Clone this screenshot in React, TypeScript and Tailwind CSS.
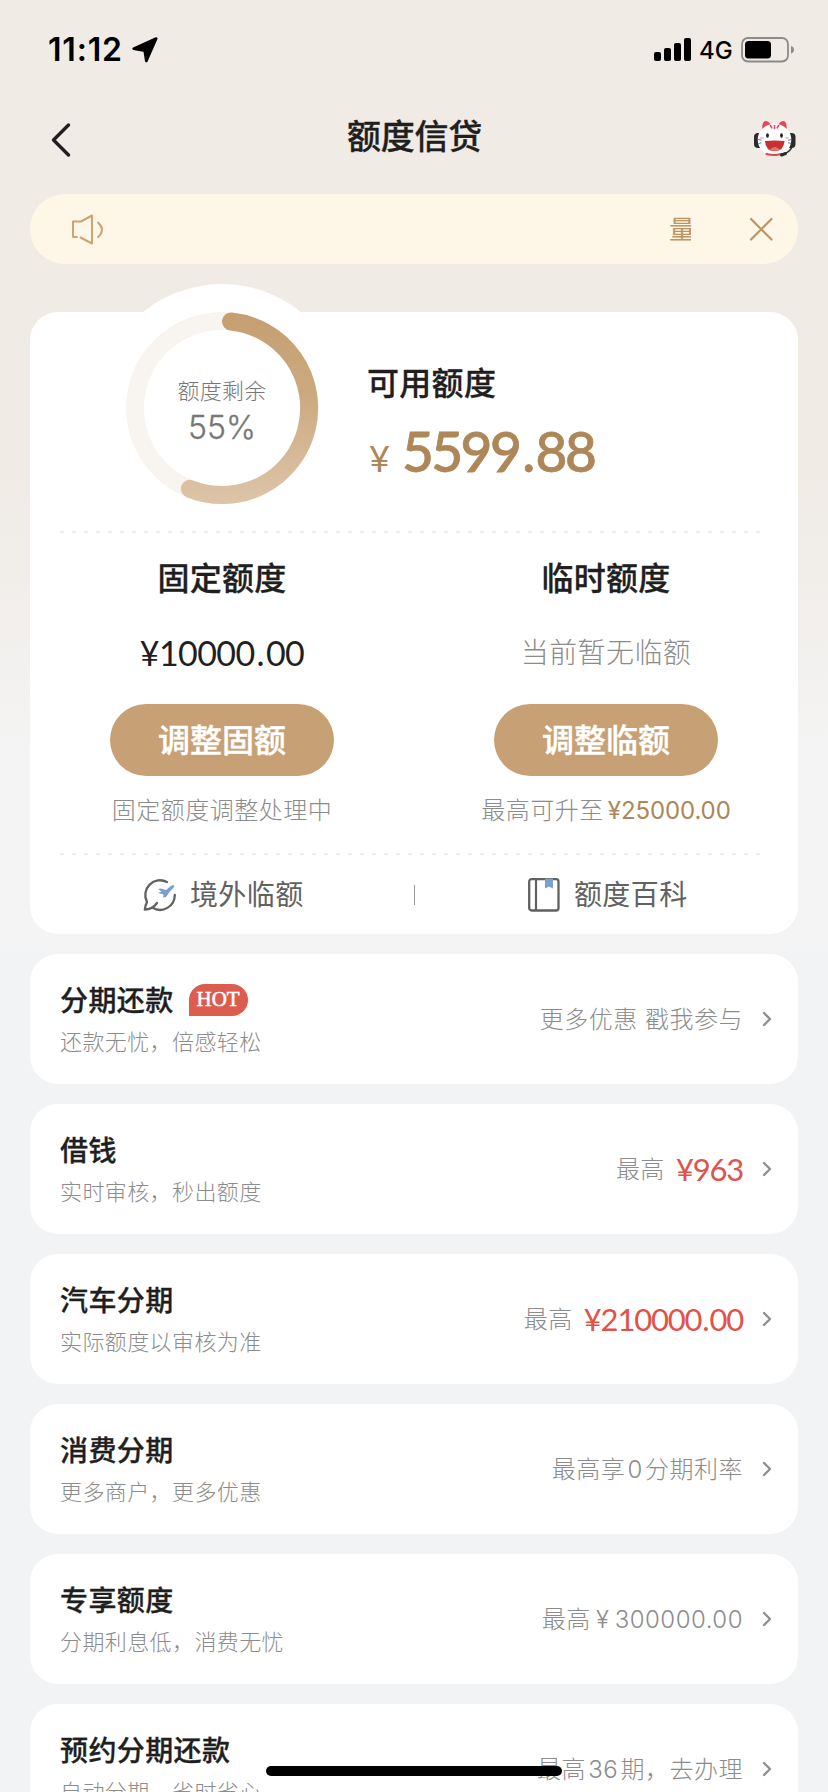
import React from "react";

type Row = {
    title: string;
    subtitle: string;
    note: string;
    noteClass?: string;
    amount?: string;
    hot?: boolean;
};

const rows: Row[] = [
    { title: "分期还款", subtitle: "还款无忧，倍感轻松", note: "更多优惠 戳我参与", hot: true },
    { title: "借钱", subtitle: "实时审核，秒出额度", note: "最高", amount: "¥963" },
    { title: "汽车分期", subtitle: "实际额度以审核为准", note: "最高", amount: "¥210000.00" },
    { title: "消费分期", subtitle: "更多商户，更多优惠", note: "最高享 0 分期利率", noteClass: "[word-spacing:-5px]" },
    { title: "专享额度", subtitle: "分期利息低，消费无忧", note: "最高 ¥ 300000.00", noteClass: "[word-spacing:-2px]" },
    { title: "预约分期还款", subtitle: "自动分期，省时省心", note: "最高 36 期，去办理", noteClass: "[word-spacing:-5px]" },
];

const StatusBar = () => (
    <div className="flex h-[99px] items-center justify-between pl-[48px] pr-[33px]">
        <div className="flex items-center gap-[9px]">
            <span className="text-[32px] font-semibold leading-none tracking-[0.8px] text-black">11:12</span>
            <svg width="26" height="26" viewBox="0 0 25 25">
                <path d="M23.3 1.5 L13.8 23 L12.2 13.2 L1.6 11.2 Z" fill="#000" stroke="#000" strokeWidth="2.6" strokeLinejoin="round" />
            </svg>
        </div>
        <div className="flex items-center">
            <svg width="38" height="24" viewBox="0 0 38 24">
                <rect x="0" y="14" width="7" height="9" rx="2" />
                <rect x="10" y="10" width="7" height="13" rx="2" />
                <rect x="20" y="5" width="7" height="18" rx="2" />
                <rect x="30" y="0" width="7" height="23" rx="2" />
            </svg>
            <span className="ml-[7px] mt-[3px] w-[42px] text-[24px] font-medium leading-none text-black">4G</span>
            <svg width="54" height="26" viewBox="0 0 54 26">
                <rect x="1" y="1" width="46" height="23.5" rx="6" fill="none" stroke="#8d8a87" strokeWidth="1.8" />
                <rect x="4" y="4" width="26" height="17.5" rx="3.5" />
                <path d="M50 9 Q53 10 53 12.7 Q53 15.5 50 16.5 Z" fill="#8d8a87" />
            </svg>
        </div>
    </div>
);

const CatIcon = () => (
    <svg className="mt-[3px]" width="44" height="38" viewBox="0 0 44 38">
        <rect x="1" y="13" width="9" height="15" rx="4" fill="#2b2b2d" />
        <rect x="33.5" y="13" width="9" height="15" rx="4" fill="#2b2b2d" />
        <path d="M9.5 11 Q8.5 1.5 12.5 1 Q16 1 18.5 6 Z" fill="#e5485a" />
        <path d="M33.5 11 Q34.5 1.5 30.5 1 Q27 1 24.5 6 Z" fill="#e5485a" />
        <ellipse cx="21.5" cy="19.8" rx="16.8" ry="16" fill="#fff" />
        <path d="M17.5 5.5 L18.8 7.8 M21.5 5.5 L21.5 8.5 M25.5 5.5 L24.2 7.8" stroke="#e5485a" strokeWidth="1.6" strokeLinecap="round" />
        <ellipse cx="14.5" cy="15.5" rx="1.4" ry="2.3" fill="#222" />
        <ellipse cx="28.5" cy="15.5" rx="1.4" ry="2.3" fill="#222" />
        <ellipse cx="9" cy="18" rx="2" ry="1" fill="#f7b9bd" />
        <ellipse cx="34" cy="18" rx="2" ry="1" fill="#f7b9bd" />
        <path d="M12 21 Q21.5 20 31.5 21 Q31 31 21.5 31 Q12.5 31 12 21 Z" fill="#c9302f" />
        <path d="M17 29.5 Q21.5 24.5 27 29.5 Q21.5 32 17 29.5 Z" fill="#e8716c" />
        <path d="M13.5 34 Q21.5 36 28 34" fill="none" stroke="#e0424f" strokeWidth="2.2" strokeLinecap="round" />
        <path d="M5 19.5 L8.5 20.2 M5.5 23.5 L8.5 22.7 M35 20.2 L38.5 19.5 M35 22.7 L38.5 23.5" stroke="#555" strokeWidth="0.8" />
        <path d="M39.5 26 Q36.5 33 29 34.5" fill="none" stroke="#2b2b2d" strokeWidth="1.5" />
        <path d="M28.5 35 L32.5 33.5" stroke="#2b2b2d" strokeWidth="3" strokeLinecap="round" />
    </svg>
);

// the decimal point sits wider apart than the digits
const Amount = ({ value, className, dotClass }: { value: string; className: string; dotClass: string }) => {
    const [whole, cents] = value.split(".");
    return (
        <span className={className}>
            {whole}
            {cents && <span className={dotClass}>.</span>}
            {cents}
        </span>
    );
};

const QuotaRing = () => (
    <div className="relative ml-[67px] mt-[-28px] h-[250px] w-[250px] shrink-0 rounded-full bg-white">
        <svg width="250" height="250" viewBox="0 0 250 250">
            <defs>
                <linearGradient id="ring" x1="0" y1="0" x2="0" y2="1">
                    <stop offset="0" stopColor="#c6a073" />
                    <stop offset="0.4" stopColor="#cba97f" />
                    <stop offset="1" stopColor="#dcc3a6" />
                </linearGradient>
            </defs>
            <circle cx="125" cy="124" r="87" fill="none" stroke="#f8f5f1" strokeWidth="18" />
            <path d="M134 37.5 A87 87 0 1 1 92.8 204.8" fill="none" stroke="url(#ring)" strokeWidth="18" strokeLinecap="round" />
        </svg>
        <div className="absolute inset-0 flex flex-col items-center pt-[91px] text-[#777]">
            <span className="text-[22px] font-light leading-[32px] tracking-[0.2px]">额度剩余</span>
            <span className="mt-[2px] text-[32px] font-light leading-[38px] [-webkit-text-stroke:0.3px]">55%</span>
        </div>
    </div>
);

const DashedLine = () => (
    <svg className="relative mx-[30px] block" width="708" height="2" viewBox="0 0 708 2">
        <line x1="0" y1="1" x2="702" y2="1" stroke="#e9e9e9" strokeWidth="1.5" strokeDasharray="4 8" />
    </svg>
);

const PlaneIcon = () => (
    <svg width="34" height="34" viewBox="0 0 34 34" fill="none">
        <path d="M24 4 A14.8 14.8 0 0 0 4 24 C2.5 27 2 29 1.8 31.5 Q9.500 31.500 14 25" stroke="#616161" strokeWidth="2.3" strokeLinecap="round" strokeLinejoin="round" />
        <path d="M9.500 29.800 A14.8 14.8 0 0 0 31.8 17" stroke="#616161" strokeWidth="2.3" strokeLinecap="round" />
        <path d="M15 11 L18 10.5 L23 12 L28.5 7.5 Q31.5 6.5 31.5 8.500 L26.5 14 L23 19 L20 19.5 L20.5 16.5 L15 15 L18.5 13.5 Z" fill="#7a9fd0" />
    </svg>
);

const BookIcon = () => (
    <svg width="32" height="34" viewBox="0 0 32 34" fill="none">
        <rect x="1.2" y="1.2" width="29.3" height="31.3" rx="2.5" stroke="#616161" strokeWidth="2.3" />
        <path d="M8 1 V33" stroke="#616161" strokeWidth="2.2" />
        <path d="M17 0.5 H25 V10.5 L21 8.5 L17 10.5 Z" fill="#7a9fd0" />
    </svg>
);

const QuotaCard = () => (
    <section className="mx-[30px] mt-12 h-[622px] rounded-[28px] bg-white">
        <div className="flex h-[219px]">
            <QuotaRing />
            <div className="ml-[20px] pt-[48px]">
                <h2 className="text-[32px] font-medium leading-[48px] tracking-[0.3px] text-[#1f1f1f] [-webkit-text-stroke:0.3px]">可用额度</h2>
                <div className="mt-[7px] flex items-baseline font-['Lato','Noto_Sans_CJK_SC',sans-serif] leading-[72px] text-[#ad8757]">
                    <span className="ml-[2px] w-[33px] text-[36px]">¥</span>
                    <Amount value="5599.88" className="text-[55px] font-medium tracking-[-2.6px] [-webkit-text-stroke:0.8px]" dotClass="mx-[3px]" />
                </div>
            </div>
        </div>
        <DashedLine />
        <div className="grid h-[320px] grid-cols-2">
            <div className="flex flex-col items-center pt-[22px]">
                <h3 className="text-[32px] font-medium leading-[48px] tracking-[0.3px] text-[#1f1f1f] [-webkit-text-stroke:0.3px]">固定额度</h3>
                <p className="mt-[26px] h-[48px] font-['Lato',sans-serif] text-[34px] leading-[48px] text-[#1f1f1f]">
                    <Amount value="¥10000.00" className="tracking-[-0.6px]" dotClass="mx-[2px]" />
                </p>
                <button className="mt-[27px] h-[72px] w-[224px] rounded-full bg-[#c7a175] pt-[2px] text-[32px] font-medium text-white [-webkit-text-stroke:0.4px]">调整固额</button>
                <p className="mt-[17px] text-[24px] font-light leading-[36px] tracking-[0.5px] text-[#8c8c8c]">固定额度调整处理中</p>
            </div>
            <div className="flex flex-col items-center pt-[22px]">
                <h3 className="text-[32px] font-medium leading-[48px] tracking-[0.3px] text-[#1f1f1f] [-webkit-text-stroke:0.3px]">临时额度</h3>
                <p className="mt-[26px] h-[48px] text-[28px] font-light leading-[48px] tracking-[0.4px] text-[#8c8c8c]">当前暂无临额</p>
                <button className="mt-[27px] h-[72px] w-[224px] rounded-full bg-[#c7a175] pt-[2px] text-[32px] font-medium text-white [-webkit-text-stroke:0.4px]">调整临额</button>
                <p className="mt-[17px] text-[24px] font-light leading-[36px] tracking-[0.5px] text-[#8c8c8c]">
                    最高可升至<span className="ml-1 font-normal tracking-[-0.1px] text-[#ad8757]">¥25000.00</span>
                </p>
            </div>
        </div>
        <DashedLine />
        <div className="flex h-[79px] items-center text-[28px] tracking-[0.4px] text-[#616161]">
            <div className="flex flex-1 items-center justify-center gap-[13px] pl-[3px]">
                <PlaneIcon />
                <span>境外临额</span>
            </div>
            <span className="h-5 w-px bg-[#999]" />
            <div className="flex flex-1 items-center justify-center gap-[14px] pl-[3px]">
                <BookIcon />
                <span>额度百科</span>
            </div>
        </div>
    </section>
);

const ProductRow = ({ row }: { row: Row }) => (
    <div className="flex h-[130px] shrink-0 items-center justify-between rounded-[28px] bg-white pl-[30px] pr-[25px]">
        <div className="pt-px">
            <div className="flex h-[44px] items-center">
                <h3 className="text-[28px] font-medium leading-[44px] tracking-[0.4px] text-[#1f1f1f] [-webkit-text-stroke:0.3px]">{row.title}</h3>
                {row.hot && (
                    <span className="mb-px ml-[15px] flex h-8 w-[59px] items-center justify-center rounded-2xl rounded-bl-none bg-[#dc5d50] font-['Liberation_Serif',serif] text-[21px] text-white [-webkit-text-stroke:0.5px]">
                        HOT
                    </span>
                )}
            </div>
            <p className="text-[22px] font-light leading-[38px] tracking-[0.4px] text-[#8c8c8c]">{row.subtitle}</p>
        </div>
        <div className="flex items-center text-[#8c8c8c]">
            <span className={`pt-[2px] text-[24px] font-light tracking-[0.5px] ${row.noteClass ?? ""}`}>{row.note}</span>
            {row.amount && (
                <Amount
                    value={row.amount}
                    className="ml-[11px] font-['Lato',sans-serif] text-[31px] leading-none tracking-[-1.2px] text-[#e0524a]"
                    dotClass="mx-[1px]"
                />
            )}
            <svg className="ml-[18px]" width="12" height="16" viewBox="0 0 12 16">
                <path d="M3 2 L9 8 L3 14" fill="none" stroke="#8f8f8f" strokeWidth="2.4" strokeLinecap="round" strokeLinejoin="round" />
            </svg>
        </div>
    </div>
);

const App = () => {
    return (
        <div className="relative h-[1792px] w-[828px] overflow-hidden bg-[#f2f3f5] font-['Inter','Noto_Sans_CJK_SC',sans-serif]">
            <div className="h-[952px] bg-linear-to-b from-[#f0ebe5] from-50% to-[#f4f4f4] to-80%">
                <StatusBar />
                <header className="flex h-[76px] items-center justify-between pl-[50px] pr-[31px]">
                    <svg width="24" height="36" viewBox="0 0 24 36" className="mt-[6px]">
                        <path d="M18.5 3 L3.5 18 L18.5 33" fill="none" stroke="#1f1f1f" strokeWidth="3.4" strokeLinecap="round" strokeLinejoin="round" />
                    </svg>
                    <h1 className="ml-[2px] text-[34px] font-medium leading-none tracking-[-0.3px] text-[#1f1f1f] [-webkit-text-stroke:0.3px]">额度信贷</h1>
                    <CatIcon />
                </header>
                {/* Notice */}
                <div className="mx-[30px] mt-[19px] flex h-[70px] items-center rounded-full bg-[#fef7e8] pl-[40px] pr-[23px] text-[#bd9464]">
                    <svg width="34" height="32" viewBox="0 0 34 32" fill="none" stroke="#cda375" strokeWidth="2" strokeLinecap="round" strokeLinejoin="round">
                        <path d="M7 24 H3 V8.5 H11 L22 2.5 V30.5 L10.5 24.5" />
                        <path d="M28 9.5 Q36 16.5 28 24" />
                    </svg>
                    <div className="ml-auto w-[22px] overflow-hidden text-[26px]">量</div>
                    <svg className="ml-[56px]" width="28" height="28" viewBox="0 0 28 28">
                        <path d="M4 4 L24.5 24.5 M24.5 4 L4 24.5" stroke="#bd9464" strokeWidth="2.2" strokeLinecap="round" />
                    </svg>
                </div>
                <QuotaCard />
            </div>
            <div className="mx-[30px] mt-[2px] flex flex-col gap-5">
                {rows.map((row) => (
                    <ProductRow key={row.title} row={row} />
                ))}
            </div>
            {/* Home indicator */}
            <div className="absolute bottom-4 left-[266px] h-[10px] w-[296px] rounded-full bg-black" />
        </div>
    );
};

export default App;
